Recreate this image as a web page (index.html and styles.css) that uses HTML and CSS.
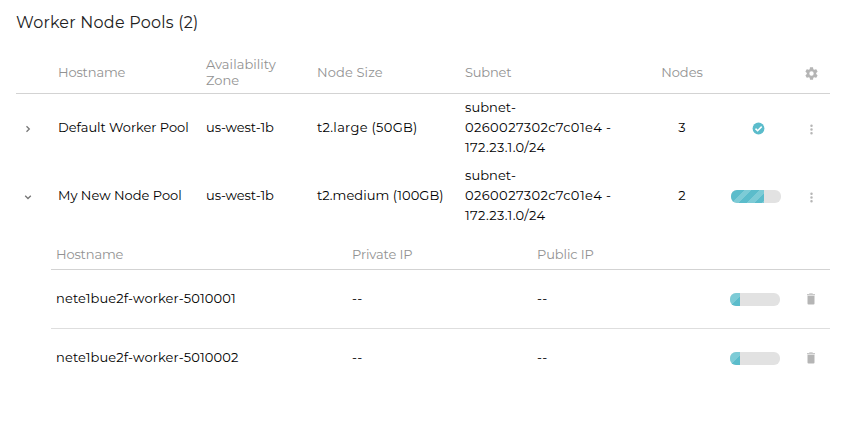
FILE: index.html
```html
<!DOCTYPE html>
<html lang="en">
<head>
<meta charset="utf-8">
<title>Worker Node Pools</title>
<link rel="stylesheet" href="styles.css">
</head>
<body>
<svg class="defs" aria-hidden="true">
  <symbol id="dots" viewBox="0 0 24 24"><path d="M12 8a2 2 0 1 0 0-4 2 2 0 0 0 0 4zm0 2a2 2 0 1 0 0 4 2 2 0 0 0 0-4zm0 6a2 2 0 1 0 0 4 2 2 0 0 0 0-4z"/></symbol>
  <symbol id="trash" viewBox="0 0 8 12"><path opacity=".75" d="M0 1h2l.6-.7h2.8L6 1h2v1.200H0z"/><path d="M.5 2.800h7V10.500a1 1 0 0 1-1 1h-5a1 1 0 0 1-1-1z"/></symbol>
</svg>
<main>
  <h1>Worker Node Pools (2)</h1>
  <section class="pools">
    <div class="row head">
      <span></span>
      <span class="t-host">Hostname</span>
      <span class="t-zone">Availability Zone</span>
      <span class="t-size">Node Size</span>
      <span class="t-sub">Subnet</span>
      <span class="count t-nodes">Nodes</span>
      <span></span>
      <span class="action"><svg class="gear" viewBox="0 0 24 24"><path d="M19.430 12.980c.04-.32.07-.64.07-.98s-.03-.66-.07-.98l2.110-1.650c.19-.15.24-.42.12-.64l-2-3.460c-.12-.22-.39-.3-.61-.22l-2.490 1c-.52-.4-1.080-.73-1.690-.98l-.38-2.650C14.460 2.180 14.250 2 14 2h-4c-.25 0-.46.18-.49.42l-.38 2.650c-.61.25-1.170.59-1.690.98l-2.490-1c-.23-.09-.49 0-.61.22l-2 3.460c-.13.22-.07.49.12.64l2.110 1.650c-.04.32-.07.65-.07.98s.03.66.07.98l-2.110 1.650c-.19.15-.24.42-.12.64l2 3.460c.12.22.39.3.61.22l2.490-1c.52.4 1.080.73 1.690.98l.38 2.650c.03.24.24.42.49.42h4c.25 0 .46-.18.49-.42l.38-2.650c.61-.25 1.170-.59 1.690-.98l2.490 1c.23.09.49 0 .61-.22l2-3.460c.12-.22.07-.49-.12-.64zM12 15.500a3.500 3.500 0 1 1 0-7 3.500 3.500 0 0 1 0 7z"/></svg></span>
    </div>
    <div class="row pool">
      <span class="toggle"><svg viewBox="0 0 8 8"><path d="M2.500 1.200 5.300 4 2.500 6.800"/></svg></span>
      <span class="t-default">Default Worker Pool</span>
      <span class="t-west">us-west-1b</span>
      <span class="t-large">t2.large (50GB)</span>
      <span class="t-subnet">subnet-<br><b>0260027302c7c01e4 -</b><br><i>172.23.1.0/24</i></span>
      <span class="count">3</span>
      <span class="status"><svg class="check" viewBox="0 0 13 13"><circle cx="6.500" cy="6.500" r="5.900"/><path d="M3.500 6.600 5.600 8.700 9.700 4.600"/></svg></span>
      <span class="action"><svg class="dots"><use href="#dots"/></svg></span>
    </div>
    <div class="row pool">
      <span class="toggle"><svg viewBox="0 0 8 8"><path d="M1.200 2.700 4 5.500 6.800 2.700"/></svg></span>
      <span class="t-new">My New Node Pool</span>
      <span class="t-west">us-west-1b</span>
      <span class="t-medium">t2.medium (100GB)</span>
      <span class="t-subnet">subnet-<br><b>0260027302c7c01e4 -</b><br><i>172.23.1.0/24</i></span>
      <span class="count">2</span>
      <span class="status progress"><span class="bar"><span class="fill" style="width:66%"></span></span></span>
      <span class="action"><svg class="dots"><use href="#dots"/></svg></span>
    </div>
  </section>
  <section class="nodes">
    <div class="node node-head">
      <span class="t-host">Hostname</span><span class="t-ip">Private IP</span><span class="t-ip">Public IP</span><span></span><span></span>
    </div>
    <div class="node">
      <span class="t-worker">nete1bue2f-worker-5010001</span><span class="dash">--</span><span class="dash">--</span>
      <span class="status"><span class="bar"><span class="fill small" style="width:20%"></span></span></span>
      <span class="action"><svg class="trash"><use href="#trash"/></svg></span>
    </div>
    <div class="node">
      <span class="t-worker">nete1bue2f-worker-5010002</span><span class="dash">--</span><span class="dash">--</span>
      <span class="status"><span class="bar"><span class="fill small" style="width:20%"></span></span></span>
      <span class="action"><svg class="trash"><use href="#trash"/></svg></span>
    </div>
  </section>
</main>
</body>
</html>
```

FILE: styles.css
```css
* { box-sizing: border-box; }
body { margin: 0; background: #fff; color: #000; font: 13px/20px Gotham, Montserrat, Inter, sans-serif; }
.defs { position: absolute; width: 0; height: 0; }
main { width: 814px; margin-left: 16px; padding-top: 13px; }
h1 { margin: 0; height: 39px; font-size: 16px; line-height: 20px; font-weight: 400; color: #222; letter-spacing: .23px; white-space: nowrap; }
svg { display: block; fill: #b5b5b5; }
b, i { font-weight: 400; font-style: normal; }
.row { display: grid; grid-template-columns: 42px 148px 111px 148px 178px 75px 79px 33px; align-items: center; height: 68px; padding-bottom: 2px; white-space: nowrap; letter-spacing: .3px; }
.head { height: 42px; border-bottom: 1px solid #d3d3d3; color: #929292; line-height: 16px; }
.count { width: 78px; text-align: center; }
.toggle { padding-left: 8px; }
.toggle svg { width: 8px; height: 8px; fill: none; stroke: #777; stroke-width: 1.3; position: relative; top: 2px; }
.status { display: flex; justify-content: center; position: relative; top: 1px; }
.pool .status { width: 81px; }
.pool .progress { justify-content: flex-start; padding-left: 13px; }
.action { display: flex; position: relative; top: 2px; }
.pools .action { margin-left: 7px; }
.gear, .dots { width: 15px; height: 15px; flex: none; }
.check { width: 13px; height: 13px; fill: #5bbccb; }
.check path { fill: none; stroke: #fff; stroke-width: 1.5; }
.bar { display: block; width: 50px; height: 13px; border-radius: 6px; background: #e2e2e2; overflow: hidden; }
.fill { display: block; height: 100%; background: linear-gradient(135deg, #5bbccb 0 9.200px, #7dcbd6 9.200px 14.800px, #5bbccb 14.800px 20px, #7dcbd6 20px 25.500px, #5bbccb 25.500px 30.600px, #7dcbd6 30.600px); }
.fill.small { background: linear-gradient(135deg, #7dcbd6 0 58%, #5bbccb 58%); }
.nodes { margin-left: 35px; padding-top: 10px; }
.node { display: grid; grid-template-columns: 296px 185px 143px 96px 54px; padding-left: 5px; padding-bottom: 2px; align-items: center; height: 59px; border-bottom: 1px solid #dedede; white-space: nowrap; letter-spacing: .3px; }
.node:last-child { border-bottom: 0; height: 58px; }
.node-head { height: 30px; color: #929292; border-color: #d3d3d3; }
.nodes .status { width: 100px; justify-content: flex-end; }
.nodes .action { width: 8px; margin-left: 31px; top: 1px; }
.trash { width: 8px; height: 12px; }
.t-host { letter-spacing: -.15px; }
.t-zone { width: 80px; white-space: normal; letter-spacing: .05px; position: relative; top: .6px; }
.t-size { letter-spacing: .13px; }
.t-sub { letter-spacing: -.2px; }
.t-nodes { letter-spacing: 0; }
.t-default { letter-spacing: -.03px; }
.t-new { letter-spacing: 0; }
.t-west { letter-spacing: -.1px; }
.t-medium { letter-spacing: .05px; }
.t-subnet { letter-spacing: .05px; }
.t-subnet b { letter-spacing: .41px; }
.t-subnet i { letter-spacing: .36px; }
.t-ip { letter-spacing: -.12px; }
.t-worker { letter-spacing: .13px; }
```
